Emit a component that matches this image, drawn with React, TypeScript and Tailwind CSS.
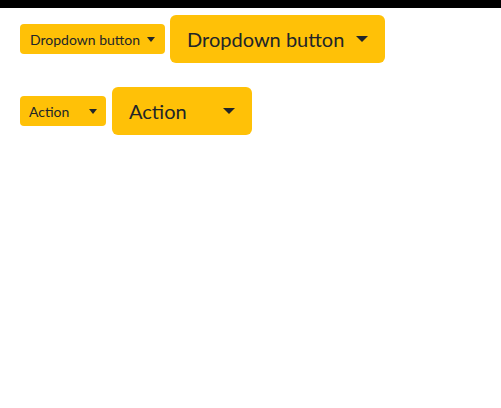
import React from "react";

const Caret = ({ size }: { size: "sm" | "lg" }) => (
  <span
    className={
      size === "sm"
        ? "inline-block border-x-[4px] border-t-[5px] border-x-transparent border-t-[#212529] ml-[7px]"
        : "inline-block border-x-[6px] border-t-[6px] border-x-transparent border-t-[#212529] ml-[12px]"
    }
  />
);

const SmallButton = ({ label, wide }: { label: string; wide?: boolean }) => (
  <button
    className={
      "flex items-center justify-between h-[30px] rounded-[4px] bg-[#ffc107] text-[14px] text-[#212529] " +
      (wide ? "w-[86px] pl-[9px] pr-[9px]" : "pl-[10px] pr-[10px]")
    }
  >
    <span>{label}</span>
    <Caret size="sm" />
  </button>
);

const LargeButton = ({ label, wide }: { label: string; wide?: boolean }) => (
  <button
    className={
      "flex items-center justify-between h-[48px] px-[17px] rounded-[6px] bg-[#ffc107] text-[20px] text-[#212529] " +
      (wide ? "w-[140px]" : "")
    }
  >
    <span>{label}</span>
    <Caret size="lg" />
  </button>
);

export default function App() {
  return (
    <div className="min-h-[408px] bg-white" style={{ fontFamily: "Lato, 'Noto Sans', sans-serif" }}>
      <div className="h-[8px] bg-black" />
      <div className="flex flex-col gap-[24px] pl-[20px] pt-[7px]">
        <div className="flex items-center gap-[5px]">
          <SmallButton label="Dropdown button" />
          <LargeButton label="Dropdown button" />
        </div>
        <div className="flex items-center gap-[6px]">
          <SmallButton label="Action" wide />
          <LargeButton label="Action" wide />
        </div>
      </div>
    </div>
  );
}
